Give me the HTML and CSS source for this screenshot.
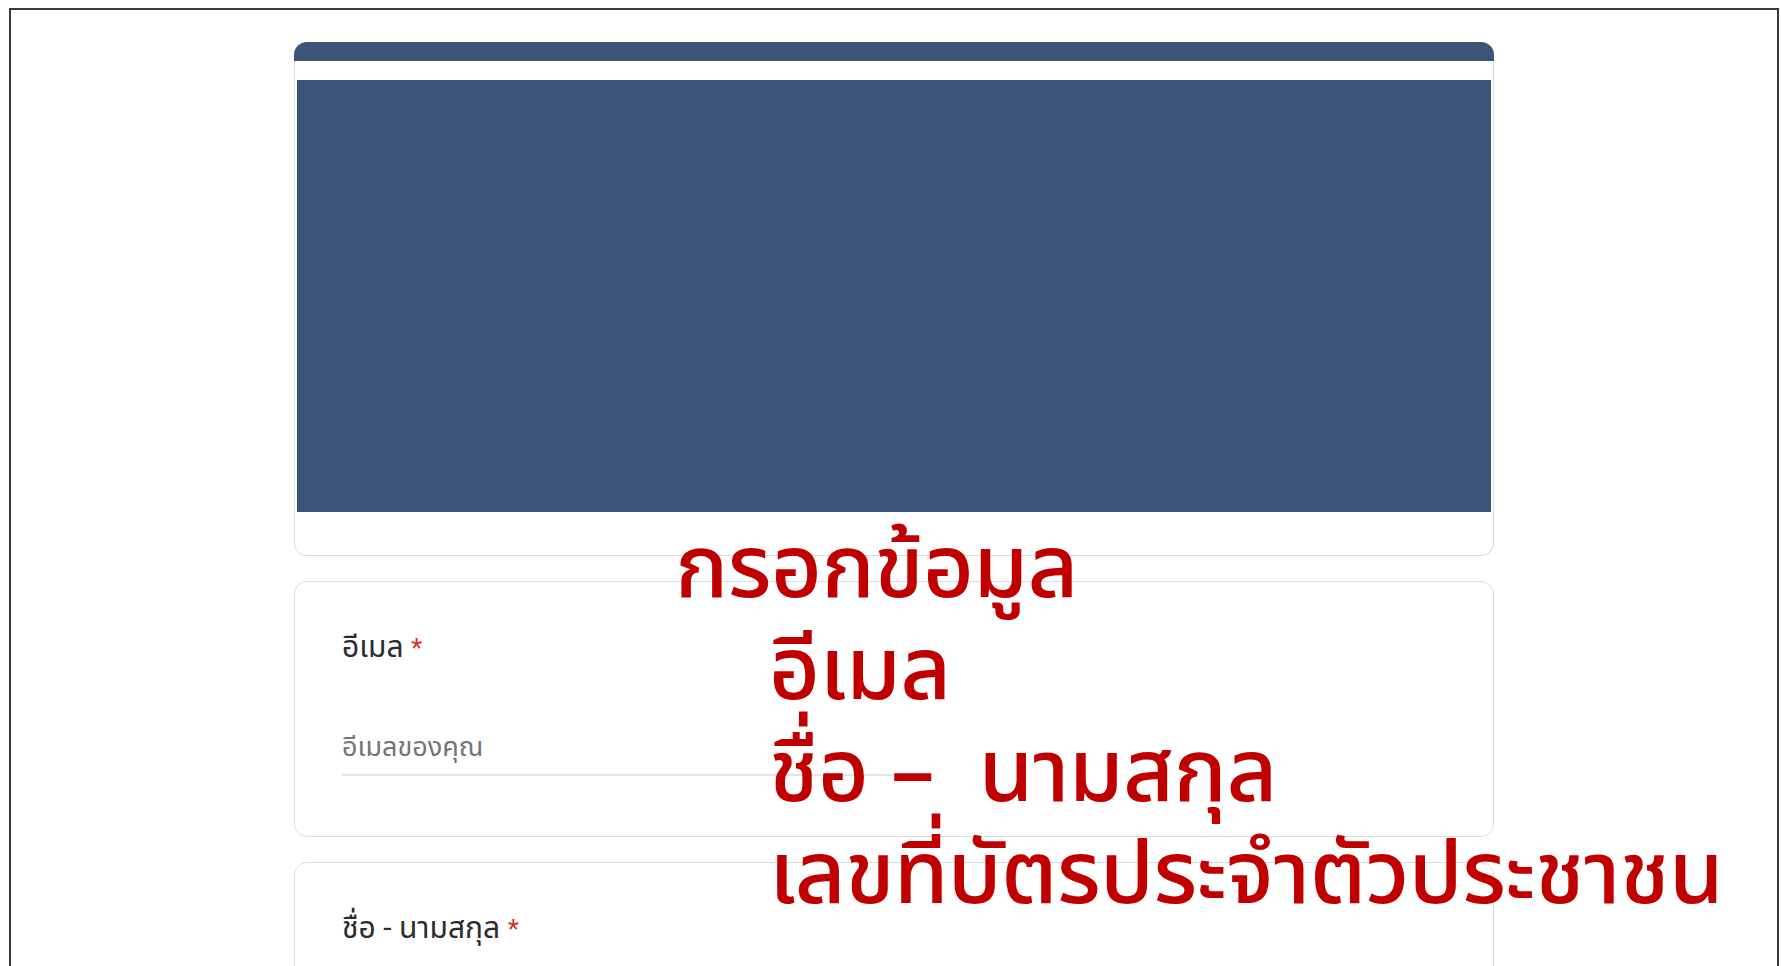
FILE: index.html
```html
<!DOCTYPE html>
<html lang="th">
<head>
<meta charset="utf-8">
<title>แบบฟอร์ม</title>
<link rel="stylesheet" href="styles.css">
</head>
<body>
<div class="frame">
  <main class="form">
    <section class="card card-head">
      <div class="accent"></div>
      <div class="banner"></div>
    </section>

    <section class="card question">
      <div class="q-label">อีเมล <span class="req">*</span></div>
      <div class="q-input">อีเมลของคุณ</div>
    </section>

    <section class="card question">
      <div class="q-label">ชื่อ - นามสกุล <span class="req">*</span></div>
      <div class="q-input"></div>
    </section>
  </main>

  <div class="callout">
    <div class="callout-title">กรอกข้อมูล</div>
    <div class="callout-item">อีเมล</div>
    <div class="callout-item">ชื่อ –&nbsp; นามสกุล</div>
    <div class="callout-item">เลขที่บัตรประจำตัวประชาชน</div>
  </div>
</div>
</body>
</html>
```

FILE: styles.css
```css
html, body {
  margin: 0;
  padding: 0;
  background: #ffffff;
  overflow: hidden;
  height: 100%;
}

body {
  font-family: Roboto, "Noto Sans Thai", "Noto Sans", sans-serif;
}

.frame {
  position: relative;
  box-sizing: border-box;
  margin: 8px 0 0 9px;
  width: 1770px;
  min-height: 1100px;
  border: 2px solid #3a3a3a;
  border-bottom: none;
  padding-top: 32px;
}

.form {
  width: 1200px;
  margin: 0 auto;
  display: flex;
  flex-direction: column;
  gap: 25px;
}

.card {
  box-sizing: border-box;
  background: #fff;
  border: 1px solid #dadce0;
  border-radius: 13px;
}

.card-head {
  height: 514px;
  border-top: none;
}

.accent {
  height: 19px;
  margin: 0 -1px;
  background: #3c5477;
  border-radius: 13px 13px 0 0;
}

.banner {
  height: 432px;
  margin: 19px 2px 0;
  background: #3c5477;
}

.question {
  height: 256px;
  padding: 46px 47px 0;
}

.q-label {
  font-size: 30px;
  line-height: 38px;
  color: #2a2b2e;
}

.req {
  color: #d93025;
  font-size: 26px;
}

.q-input {
  box-sizing: border-box;
  width: 552px;
  height: 54px;
  margin-top: 55px;
  padding-top: 3px;
  border-bottom: 2px solid #e3e4e6;
  font-size: 27px;
  line-height: 44px;
  color: #70757a;
}

.callout {
  position: absolute;
  left: 664px;
  top: 510px;
  font-family: "Noto Sans Thai", "Noto Sans", sans-serif;
  font-size: 88px;
  font-weight: 500;
  letter-spacing: -0.6px;
  line-height: 102px;
  color: #c00000;
  white-space: nowrap;
}

.callout-item {
  margin-left: 94px;
}
```
